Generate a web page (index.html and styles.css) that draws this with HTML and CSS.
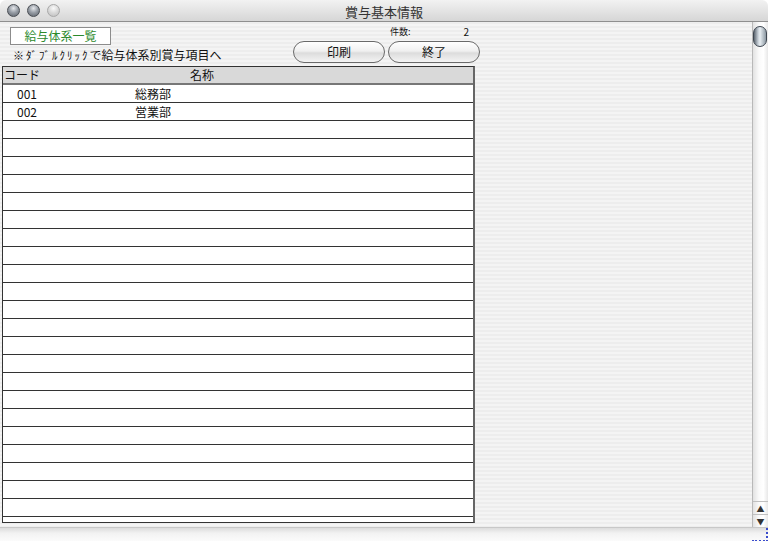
FILE: index.html
```html
<!DOCTYPE html>
<html lang="ja">
<head>
    <meta charset="UTF-8">
    <title>賞与基本情報</title>
    <link rel="stylesheet" href="styles.css">
</head>
<body>
    <div class="window">
        <div class="titlebar">
            <div class="lights">
                <span class="light"></span>
                <span class="light"></span>
                <span class="light dim"></span>
            </div>
            <div class="title">賞与基本情報</div>
        </div>

        <div class="main">
            <div class="content">
                <div class="top">
                    <div class="top-left">
                        <div class="label-box">給与体系一覧</div>
                        <div class="note"><span class="hw">※ﾀﾞﾌﾞﾙｸﾘｯｸ</span>で給与体系別賞与項目へ</div>
                    </div>
                    <div class="top-right">
                        <div class="count">
                            <span class="count-label">件数:</span>
                            <span class="count-value">2</span>
                        </div>
                        <div class="buttons">
                            <button class="btn">印刷</button>
                            <button class="btn">終了</button>
                        </div>
                    </div>
                </div>

                <div class="table">
                    <div class="row head">
                        <div class="c-code">コード</div>
                        <div class="c-name">名称</div>
                    </div>
                    <div id="rows"></div>
                    <div class="row tail"></div>
                </div>
            </div>

            <div class="scrollbar">
                <div class="thumb"></div>
                <div class="track"></div>
                <div class="arrow">&#9650;</div>
                <div class="arrow">&#9660;</div>
            </div>
        </div>

        <div class="bottom">
            <div class="grip"></div>
        </div>
    </div>

    <script>
        const data = [
            { code: '001', name: '総務部' },
            { code: '002', name: '営業部' }
        ];
        const rows = document.getElementById('rows');
        for (let i = 0; i < 24; i++) {
            const row = document.createElement('div');
            row.className = 'row';
            const item = data[i] || { code: '', name: '' };
            row.innerHTML = '<div class="c-code">' + item.code + '</div><div class="c-name">' + item.name + '</div>';
            rows.appendChild(row);
        }
    </script>
</body>
</html>
```

FILE: styles.css
```css
* {
    margin: 0;
    padding: 0;
    box-sizing: border-box;
}

body {
    font-family: "Noto Sans CJK JP", "Noto Sans", sans-serif;
    font-size: 12px;
    color: #111;
    width: 768px;
    height: 541px;
    overflow: hidden;
}

.window {
    display: flex;
    flex-direction: column;
    height: 541px;
    background: #fff;
}

/* タイトルバー */
.titlebar {
    height: 22px;
    display: flex;
    align-items: center;
    position: relative;
    background: linear-gradient(#f2f2f2, #e4e4e4 50%, #d6d6d6);
    border-bottom: 1px solid #8e8e8e;
    border-radius: 6px 6px 0 0;
}

.lights {
    display: flex;
    gap: 7px;
    padding-left: 7px;
}

.light {
    width: 13px;
    height: 13px;
    border-radius: 50%;
    background: radial-gradient(circle at 50% 30%, #e6e8ec 0, #9aa0a8 45%, #5a6068 100%);
    border: 1px solid #4a4e54;
}

.light.dim {
    background: radial-gradient(circle at 50% 30%, #fafafa 0, #d8d8d8 50%, #bcbcbc 100%);
    border-color: #a8a8a8;
}

.title {
    position: absolute;
    left: 0;
    right: 0;
    text-align: center;
    font-size: 13px;
    color: #333;
    top: 2px;
}

.main {
    flex: 1;
    display: flex;
    background: repeating-linear-gradient(#ededed 0 2px, #f4f4f4 2px 4px);
}

.content {
    flex: 1;
    padding-left: 2px;
}

.top {
    display: flex;
    height: 44px;
}

.top-left {
    width: 291px;
    padding-top: 5px;
}

.label-box {
    margin-left: 8px;
    width: 101px;
    height: 18px;
    background: #fff;
    border: 1px solid #8c8c8c;
    color: #2c8a2c;
    font-size: 12px;
    line-height: 16px;
    text-align: center;
}

.note {
    margin-left: 11px;
    margin-top: 1px;
    font-size: 12px;
    line-height: 17px;
    color: #111;
}

.note .hw {
    font-size: 11px;
    letter-spacing: 2px;
}

.top-right {
    width: 190px;
    padding-top: 4px;
}

.count {
    display: flex;
    font-size: 9px;
    line-height: 12px;
    height: 15px;
}

.count-label {
    margin-left: 97px;
}

.count-value {
    margin-left: 53px;
    font-size: 10px;
}

.buttons {
    display: flex;
    gap: 3px;
}

.btn {
    width: 92px;
    height: 22px;
    border-radius: 11px;
    border: 1px solid #6a6a6a;
    background: linear-gradient(#ffffff, #f0f0f0 45%, #dcdcdc 55%, #f4f4f4);
    font-family: inherit;
    font-size: 12px;
    color: #111;
    line-height: 18px;
}

/* 一覧 */
.table {
    width: 473px;
    height: 457px;
    background: #fff;
    border: 1px solid #333;
    border-right: 2px solid #666;
    overflow: hidden;
}

.row {
    display: flex;
    height: 18px;
    border-bottom: 1px solid #333;
    line-height: 17px;
}

.row.head {
    background: #d9d9d9;
    border-bottom: 2px solid #777;
    height: 18px;
    line-height: 16px;
}

.row.tail {
    border-bottom: none;
}

.c-code {
    width: 132px;
    padding-left: 14px;
}

.c-name {
    flex: 1;
}

.head .c-code {
    padding-left: 1px;
}

.head .c-name {
    padding-left: 55px;
}

/* スクロールバー */
.scrollbar {
    width: 16px;
    display: flex;
    flex-direction: column;
    background: linear-gradient(to right, #e2e2e2, #fafafa 40%, #ffffff 70%, #e8e8e8);
    border-left: 1px solid #b8b8b8;
    padding-top: 4px;
}

.thumb {
    height: 21px;
    margin: 0 1px 0 0;
    border-radius: 8px;
    border: 1px solid #3e4650;
    background: linear-gradient(to right, #5c6670, #c8d0d8 35%, #e8eef2 50%, #8c98a2 100%);
}

.track {
    flex: 1;
}

.arrow {
    height: 13px;
    font-size: 8px;
    line-height: 13px;
    text-align: center;
    color: #333;
    border-top: 1px solid #c0c0c0;
}

.bottom {
    height: 14px;
    display: flex;
    justify-content: flex-end;
    background: linear-gradient(#dcdcdc, #f2f2f2 40%, #fbfbfb);
    border-top: 1px solid #c8c8c8;
}

.grip {
    width: 16px;
    height: 14px;
    border-right: 2px dotted #3a4ccc;
    border-bottom: 2px dotted #3a4ccc;
}
```
